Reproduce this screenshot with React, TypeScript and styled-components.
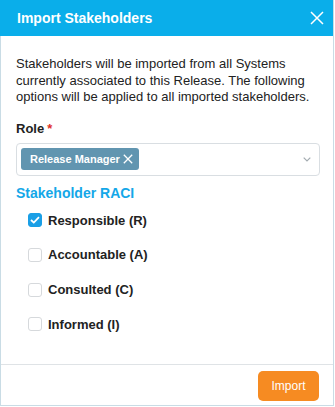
import React from "react";
import styled, { createGlobalStyle } from "styled-components";

const Global = createGlobalStyle`
  html, body { margin: 0; padding: 0; background: #fff; }
  body { font-family: "Liberation Sans", Arial, Helvetica, sans-serif; }
  * { box-sizing: border-box; }
`;

const Dialog = styled.div`
  width: 334px;
  height: 406px;
  border: 1px solid #c9dce5;
  border-top: none;
  display: flex;
  flex-direction: column;
  background: #fff;
`;

const Header = styled.div`
  height: 36px;
  margin-left: -1px;
  background: #0aaeea;
  display: flex;
  align-items: center;
  justify-content: space-between;
  padding: 0 8px 0 17px;
`;

const Title = styled.h1`
  margin: 0;
  color: #fff;
  font-size: 14px;
  font-weight: bold;
  line-height: 16px;
`;

const Close = styled.button`
  border: none;
  background: none;
  padding: 0;
  width: 16px;
  height: 16px;
  display: flex;
  align-items: center;
  justify-content: center;
  cursor: pointer;
`;

const Body = styled.div`
  flex: 1;
  padding: 20px 13px 0 15px;
  display: flex;
  flex-direction: column;
`;

const Intro = styled.p`
  margin: 0;
  font-size: 13px;
  line-height: 16.5px;
  color: #222;
`;

const Label = styled.div`
  margin-top: 15px;
  font-size: 13px;
  line-height: 15px;
  font-weight: bold;
  color: #222;
`;

const Req = styled.span`
  color: #e0322b;
  margin-left: 3px;
`;

const Select = styled.div`
  margin-top: 7px;
  height: 33px;
  border: 1px solid #d9dee2;
  border-radius: 4px;
  display: flex;
  align-items: center;
  padding: 0 8px 0 4px;
  justify-content: space-between;
`;

const Tag = styled.span`
  display: inline-flex;
  align-items: center;
  gap: 3px;
  height: 22px;
  padding: 0 6px 0 9px;
  background: #6195b0;
  border-radius: 3px;
  color: #fff;
  font-size: 11px;
  font-weight: bold;
`;

const Section = styled.h2`
  margin: 9px 0 0 0;
  font-size: 14px;
  line-height: 16px;
  font-weight: bold;
  color: #14a7e8;
`;

const Options = styled.div`
  display: flex;
  flex-direction: column;
  gap: 20.7px;
  padding-left: 12px;
  margin-top: 12.7px;
`;

const Option = styled.label`
  display: flex;
  align-items: center;
  gap: 6px;
  font-size: 13px;
  line-height: 15px;
  font-weight: bold;
  color: #222;
  height: 14px;
`;

const Box = styled.span<{ $checked?: boolean }>`
  width: 14px;
  height: 14px;
  border-radius: 3px;
  border: 1px solid ${(p) => (p.$checked ? "#1a9fe6" : "#d6d9dc")};
  background: ${(p) => (p.$checked ? "#1a9fe6" : "#fff")};
  display: flex;
  align-items: center;
  justify-content: center;
`;

const Footer = styled.div`
  height: 41px;
  border-top: 1px solid #dfe3e6;
  display: flex;
  align-items: flex-start;
  justify-content: flex-end;
  padding: 6px 14px 0 0;
`;

const Button = styled.button`
  height: 30px;
  width: 61px;
  border: none;
  border-radius: 5px;
  background: #f68b22;
  color: #fff;
  font-family: "Liberation Sans", Arial, sans-serif;
  font-size: 12px;
  cursor: pointer;
`;

const opts = [
  { label: "Responsible (R)", checked: true },
  { label: "Accountable (A)", checked: false },
  { label: "Consulted (C)", checked: false },
  { label: "Informed (I)", checked: false },
];

export default function App() {
  return (
    <>
      <Global />
      <Dialog>
        <Header>
          <Title>Import Stakeholders</Title>
          <Close aria-label="Close">
            <svg width="14" height="14" viewBox="0 0 14 14">
              <path d="M1 1 L13 13 M13 1 L1 13" stroke="#fff" strokeWidth="1.5" fill="none" />
            </svg>
          </Close>
        </Header>
        <Body>
          <Intro>
            Stakeholders will be imported from all Systems currently associated to this Release. The following options will be applied to all imported stakeholders.
          </Intro>
          <Label>
            Role<Req>*</Req>
          </Label>
          <Select>
            <Tag>
              Release Manager
              <svg width="10" height="10" viewBox="0 0 10 10">
                <path d="M0.8 0.8 L9.2 9.2 M9.2 0.8 L0.8 9.2" stroke="#fff" strokeWidth="1.3" fill="none" />
              </svg>
            </Tag>
            <svg width="8" height="5" viewBox="0 0 8 5">
              <path d="M0.7 0.7 L4 4 L7.3 0.7" stroke="#a3abb0" strokeWidth="1.2" fill="none" />
            </svg>
          </Select>
          <Section>Stakeholder RACI</Section>
          <Options>
            {opts.map((o) => (
              <Option key={o.label}>
                <Box $checked={o.checked}>
                  {o.checked && (
                    <svg width="10" height="8" viewBox="0 0 10 8">
                      <path d="M1 4 L3.8 6.6 L9 1.2" stroke="#fff" strokeWidth="1.8" fill="none" />
                    </svg>
                  )}
                </Box>
                {o.label}
              </Option>
            ))}
          </Options>
        </Body>
        <Footer>
          <Button>Import</Button>
        </Footer>
      </Dialog>
    </>
  );
}
